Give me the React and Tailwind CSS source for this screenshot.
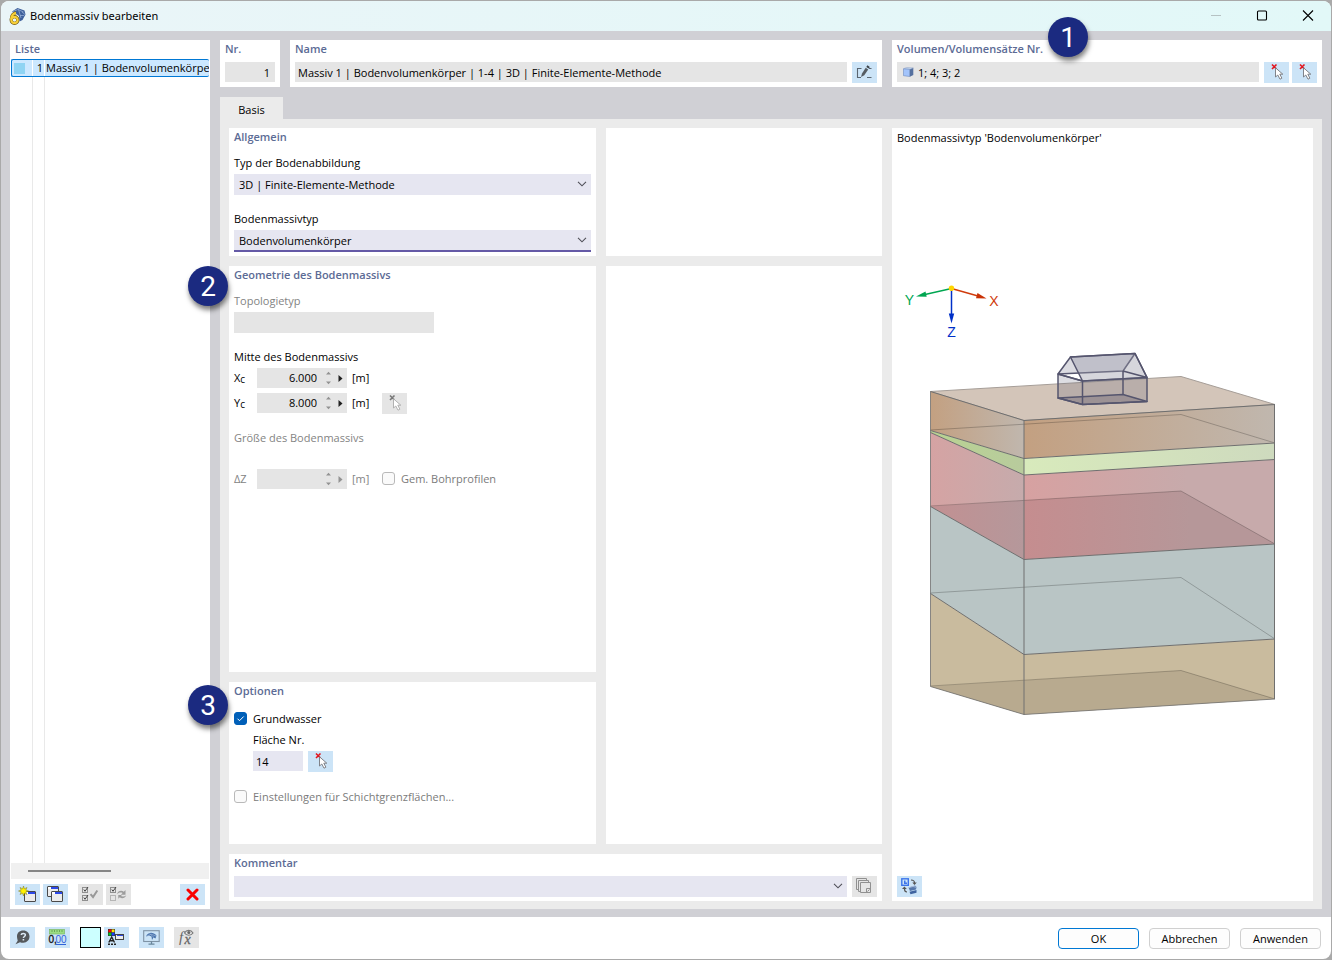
import React from "react";

const iconButton = "flex h-[21px] w-[25px] shrink-0 items-center justify-center bg-[#cce4f7]";
const iconButtonOff = "flex h-[21px] w-[25px] shrink-0 items-center justify-center bg-[#e5e5e5]";

function Heading({ children }) {
  return <h2 className="h-[18px] text-[11px] leading-[18px] font-semibold text-[#5c6b95]">{children}</h2>;
}

function Badge({ n, className }) {
  return (
    <span
      className={
        "absolute z-10 flex size-10 items-center justify-center rounded-full bg-[#1b2a80] pt-[2px] font-['Roboto',sans-serif] text-[28px] leading-none text-white shadow-[1px_4px_5px_rgba(0,0,0,0.5)] " +
        className
      }
    >
      {n}
    </span>
  );
}

function Select({ id, value, focused }) {
  return (
    <div className="relative w-full">
      <select
        id={id}
        defaultValue={value}
        className={
          "block w-full appearance-none rounded-none bg-[#e6e6f1] pl-[5px] pr-6 text-[11px] leading-[21px] text-black outline-none " +
          (focused ? "h-[22px] border-b-2 border-[#6459a6]" : "h-[21px]")
        }
      >
        <option>{value}</option>
      </select>
      <svg className="pointer-events-none absolute right-1 top-[6px]" width="10" height="8" viewBox="0 0 10 8" fill="none" stroke="#505058" strokeWidth="1.1">
        <path d="M1 1.8 5 5.8 9 1.8" />
      </svg>
    </div>
  );
}

function PickIcon({ off }) {
  return (
    <svg width="21" height="19" viewBox="0 0 21 19" fill="none">
      <path d="M6 1.5 10.5 6M10.5 1.5 6 6" stroke={off ? "#777" : "#e3141c"} strokeWidth="1.6" />
      <path d="M9.5 4.8V14l2.3-2 2.2 4.2 1.9-1-2.1-4h3z" fill="#fff" stroke={off ? "#aaa" : "#75767c"} strokeWidth="0.9" />
    </svg>
  );
}

function EditIcon() {
  return (
    <svg width="17" height="15" viewBox="0 0 17 15" fill="none">
      <path d="M5.500 3.500H1.500V12.500H5M11 12.500H15.500M13 3.500H15.500" stroke="#5a6570" strokeWidth="1.1" />
      <path d="M5 12 6 8.500 9.700 2.800 12.200 4.400 8.300 10.200z" fill="#555c63" />
      <path d="M10.300 2 11.400.3 13.800 1.900 12.700 3.600z" fill="#3c4147" />
    </svg>
  );
}

function AppIcon() {
  return (
    <svg width="17" height="17" viewBox="0 0 17 17">
      <path d="M3 3.500 8.500 0 15.500 2.500 16.500 6.500 13.500 12 10.500 13.500 10 8 6 5z" fill="#3d5f9b" />
      <path d="M4 3.500 9 1.500 14.500 4M9.500 1.500 12 10M13 4 16 6.500M11 7.500 15 7.500" stroke="#9db6dc" strokeWidth=".7" fill="none" />
      <path d="M7 4.800C4 5.500 2.300 8.300 2.300 11.500" fill="none" stroke="#6b5410" strokeWidth="3.200" />
      <circle cx="5.500" cy="12" r="3.300" fill="none" stroke="#6b5410" strokeWidth="3.200" />
      <path d="M7 4.900C4.200 5.600 2.400 8.300 2.300 11.500" fill="none" stroke="#f7cf38" strokeWidth="2.200" />
      <circle cx="5.500" cy="12" r="3.200" fill="none" stroke="#f7cf38" strokeWidth="2.200" />
    </svg>
  );
}

function CubeIcon() {
  return (
    <svg width="11" height="10" viewBox="0 0 11 10">
      <path d="M.5 1.800 3.500.4 10.300.9 7 2.400z" fill="#c6d7ee" stroke="#7c93bd" strokeWidth=".4" />
      <path d="M.5 1.800 6.800 2.400V9.500L.5 8.700z" fill="#a3c4fb" stroke="#6f8cc0" strokeWidth=".6" />
      <path d="M6.800 2.400 10.300 1V8L6.800 9.700z" fill="#55709f" />
    </svg>
  );
}

function WindowShape({ x, y }) {
  return (
    <g transform={`translate(${x} ${y})`}>
      <rect x=".5" y=".5" width="11" height="10" rx=".5" fill="#ececec" stroke="#4a4a4a" />
      <rect x="1" y="1" width="10" height="2" fill="#fff" />
      <rect x="4" y="1" width="7" height="2" fill="#2c49e8" />
    </g>
  );
}

function NewIcon() {
  return (
    <svg width="19" height="17" viewBox="0 0 19 17">
      <WindowShape x="6" y="5" />
      <path d="M5.500 0 6.400 2.800 9 1.500 7.800 4.100 10.500 5 7.800 5.900 9 8.500 6.400 7.200 5.500 10 4.600 7.200 2 8.500 3.200 5.900.5 5 3.200 4.100 2 1.500 4.600 2.800z" fill="#fff200" stroke="#77742c" strokeWidth=".5" />
    </svg>
  );
}

function CopyWindowsIcon() {
  return (
    <svg width="17" height="17" viewBox="0 0 17 17">
      <WindowShape x="0" y="0" />
      <WindowShape x="4" y="5" />
    </svg>
  );
}

function ChecksIcon({ swap }) {
  return (
    <svg width="17" height="17" viewBox="0 0 17 17" fill="none" stroke="#8f8f8f">
      <rect x=".5" y="1.500" width="5" height="5" />
      <path d="M1.800 3.500 3 5.300 6 1" stroke="#444" />
      <rect x=".5" y="9.500" width="5" height="5" stroke={swap ? "#b5b5b5" : "#8f8f8f"} />
      {swap ? (
        <g fill="#9c9c9c" stroke="none">
          <path d="M6.800 8.200C8 4.800 11.500 4 13.800 5.800L15.500 4V8.800H10.800L12.600 7C10.800 6.200 8.600 6.500 6.800 8.200z" />
          <path d="M16.300 9.300C15 12.300 11.800 12.900 9.800 11.300L8.300 12.800V9L12 8.900 10.900 10.100C12.600 10.900 14.700 10.700 16.300 9.300z" />
        </g>
      ) : (
        <>
          <path d="M1.800 11.500 3 13.300 6 9" stroke="#444" />
          <path d="M8.500 8.200 11 11 15.300 4.500" stroke="#999" strokeWidth="2" />
        </>
      )}
    </svg>
  );
}

function DeleteIcon() {
  return (
    <svg width="13" height="13" viewBox="0 0 13 13" stroke="#f90000" strokeWidth="3" strokeLinecap="round">
      <path d="M2 2 11 11M11 2 2 11" />
    </svg>
  );
}

function HelpIcon() {
  return (
    <svg width="15" height="15" viewBox="0 0 15 15">
      <path d="M8.300.5C4.500.5 2 2.900 2 6.200 2 8.500 2.700 9.700 2.700 10.700L.5 14.300 5 12.200C6 12.600 7 12.700 8.300 12.700 12 12.700 14.500 10 14.500 6.600 14.500 3 12 .5 8.300.5z" fill="#55585b" />
      <path d="M6.200 5C6.300 3.200 10.400 3 10.400 5.100 10.400 6.500 8.400 6.500 8.400 8" fill="none" stroke="#dce9f4" strokeWidth="1.500" />
      <rect x="7.600" y="9" width="1.600" height="1.500" fill="#dce9f4" />
    </svg>
  );
}

function UnitsIcon() {
  return (
    <svg width="19" height="17" viewBox="0 0 19 17">
      <rect x="1.500" y=".5" width="15" height="4.500" fill="#9bdc83" stroke="#79b965" strokeWidth=".7" />
      <path d="M4 1V3M6.500 1V3M9 1V3M11.500 1V3M14 1V3" stroke="#5e9c4d" strokeWidth=".8" />
      <text x="0.500" y="14" fontSize="10" fontFamily="Liberation Sans, sans-serif" fill="#111" stroke="#111" strokeWidth=".3">0,</text>
      <text x="7.500" y="14" fontSize="10" fontFamily="Liberation Sans, sans-serif" fill="#2f62d9">00</text>
      <path d="M8 15.500H18" stroke="#2f62d9" />
    </svg>
  );
}

function ColorsIcon() {
  return (
    <svg width="19" height="17" viewBox="0 0 19 17">
      <rect x="1" y="0" width="7" height="7" fill="#333" />
      <rect x="1.500" y=".5" width="2.800" height="2.800" fill="#f00" />
      <rect x="4.700" y=".5" width="2.800" height="2.800" fill="#ffe600" />
      <rect x="1.500" y="3.700" width="2.800" height="2.800" fill="#00c41a" />
      <rect x="4.700" y="3.700" width="2.800" height="2.800" fill="#173cff" />
      <path d="M1.800 13.500 4.700 8 7.500 13.500M3 11.800H6.500" fill="none" stroke="#222" strokeWidth="1.400" />
      <path d="M1 15.300H9" stroke="#222" strokeWidth="1.600" strokeDasharray="2 1" />
      <rect x="8.500" y="5.500" width="8" height="5" fill="#ececec" stroke="#444" />
      <rect x="10" y="6" width="6" height="1" fill="#2c49e8" />
    </svg>
  );
}

function MonitorIcon() {
  return (
    <svg width="17" height="15" viewBox="0 0 17 15" fill="none">
      <rect x=".7" y=".7" width="15.500" height="10.800" stroke="#7f93a5" strokeWidth="1.100" />
      <path d="M8.500 11.500V14M5.500 14.200H11.500" stroke="#69869c" strokeWidth="1.300" />
      <path d="M3 6.500C5 1.800 10 1.500 13.500 5.500L12.500 8.500 10.500 7.500 9 10 8.500 6.500 6 5.500z" fill="#4a74ad" />
      <path d="M4 6 8 4.200 13 6M6.500 3.500 11 7.500" stroke="#a2bcdd" strokeWidth=".6" />
    </svg>
  );
}

function FxIcon() {
  return (
    <svg width="19" height="17" viewBox="0 0 19 17" fill="none">
      <text x="2" y="13" fontSize="15" fontStyle="italic" fontFamily="Liberation Serif, serif" fill="#666">f</text>
      <text x="7.500" y="14.500" fontSize="14" fontStyle="italic" fontFamily="Liberation Serif, serif" fill="#666" stroke="#666" strokeWidth=".3">x</text>
      <path d="M7.500 4C9.500.5 14 .5 16 4 14 7 9.500 7 7.500 4z" stroke="#777" strokeWidth="1.100" />
      <circle cx="11.800" cy="3.500" r="1.500" fill="#666" />
    </svg>
  );
}

function LayersIcon() {
  return (
    <svg width="17" height="17" viewBox="0 0 17 17" fill="none" stroke="#909090">
      <path d="M2.500 11.500H.5V.5H10.500V2.500M4.500 13.500H2.500V2.500H12.500V4.500" />
      <path d="M4.500 4.500H14.500V14.500H4.500zM10.500 14.500V10.500H14.500M11.500 13.500 13.500 11.500" />
    </svg>
  );
}

function ViewSwapIcon() {
  return (
    <svg width="17" height="17" viewBox="0 0 17 17" fill="none">
      <rect x=".8" y=".8" width="6.500" height="6.500" stroke="#3c74ea" strokeWidth="1.400" />
      <path d="M3 2.500V6H6V4.500H4.500V2.500z" fill="#3c74ea" />
      <path d="M10 2C12.500 2 13.500 3 13.500 5" stroke="#555" strokeWidth="1.200" />
      <path d="M11.300 4.500 13.500 7 15.800 4.500z" fill="#555" />
      <path d="M3.500 11C3.500 13 4.500 14 6 14" stroke="#555" strokeWidth="1.200" />
      <path d="M1 11 3.400 8.500 5.800 11z" fill="#555" />
      <path d="M7.500 9.500 14 7.500 15.500 9 15 11.500 9 13z" fill="#5577ab" />
      <path d="M8.500 13.800 15.500 12V14.800L9.500 16.300z" fill="#3f639f" />
      <path d="M8 9.500 12 8.500 15 9.200" stroke="#b9cae4" strokeWidth=".8" />
    </svg>
  );
}

function NumberField({ id, label, sub, value, disabled }) {
  const c = disabled ? "text-[#838383]" : "text-black";
  return (
    <div className={"flex h-5 items-center text-[11px] leading-5 " + c}>
      <label htmlFor={id} className="w-[23px]">
        {label}
        {sub && <sub className="bottom-0 align-[-1px] text-[10px] leading-none">{sub}</sub>}
      </label>
      <div className="flex h-5 w-[90px] items-center bg-[#e5e5e5]">
        <input id={id} defaultValue={value} disabled={disabled} className="h-5 w-[60px] bg-transparent text-right outline-none" />
        <svg width="30" height="20" viewBox="0 0 30 20">
          <path d="M9 6.500 11.500 3.800 14 6.500zM9 13.500 11.500 16.200 14 13.500z" fill="#929292" />
          <path d="M21.500 7V14L25.500 10.500z" fill={disabled ? "#929292" : "#202020"} />
        </svg>
      </div>
      <span className="ml-[5px] w-[30px]">[m]</span>
    </div>
  );
}

function CheckRow({ id, label, checked, disabled }) {
  return (
    <div className="flex h-[18px] items-start gap-[6px]">
      <span className="relative mt-[2px] block size-[13px]">
        <input
          id={id}
          type="checkbox"
          defaultChecked={checked}
          disabled={disabled}
          className="peer block size-[13px] appearance-none rounded-[3px] border border-[#b9b9b9] bg-[#fafafa] checked:border-[#005fb8] checked:bg-[#005fb8]"
        />
        <svg className="pointer-events-none absolute inset-0 hidden peer-checked:block" width="13" height="13" viewBox="0 0 13 13" fill="none" stroke="#fff">
          <path d="M3.500 6.700 5.500 8.700 9.700 4.500" />
        </svg>
      </span>
      <label htmlFor={id} className={"text-[11px] leading-[18px] " + (disabled ? "text-[#7b7b7b]" : "text-black")}>
        {label}
      </label>
    </div>
  );
}

const edge = "#6f6f6f";

function SoilDrawing() {
  return (
    <svg className="h-auto w-full" viewBox="892 280 421 464" role="img" aria-label="Bodenvolumenkörper" fill="none" strokeLinejoin="round">
      <defs>
        <linearGradient id="soilA"><stop offset="0" stopColor="#c3a081" /><stop offset="1" stopColor="#c0b7ae" /></linearGradient>
        <linearGradient id="soilB"><stop offset="0" stopColor="#b9d392" /><stop offset="1" stopColor="#b8cb9d" /></linearGradient>
        <linearGradient id="soilC"><stop offset="0" stopColor="#d8eabc" /><stop offset="1" stopColor="#cedabe" /></linearGradient>
        <linearGradient id="soilD"><stop offset="0" stopColor="#d7a1a1" /><stop offset=".65" stopColor="#c7aaab" /></linearGradient>
        <linearGradient id="soilE"><stop offset="0" stopColor="#d5a3a3" /><stop offset="1" stopColor="#c6abac" /></linearGradient>
        <linearGradient id="soilF" gradientUnits="userSpaceOnUse" x1="1024" y1="0" x2="1190" y2="0"><stop offset="0" stopColor="#c58d8f" /><stop offset="1" stopColor="#b69799" /></linearGradient>
        <linearGradient id="soilG"><stop offset="0" stopColor="#c29092" /><stop offset="1" stopColor="#b5989b" /></linearGradient>
      </defs>

      <path d="M930.500 391.500 1181 376.500 1275 404.500 1024 420.500z" fill="#d3c5b9" stroke="#a69e98" />
      <path d="M930.500 391.500 1024 420.500V458.500L930.500 430.500z" fill="url(#soilA)" />
      <path d="M1024 420.500 1275 404.500V443L1024 458.500z" fill="url(#soilA)" />
      <path d="M930.500 430.500 1024 458.500V475L930.500 432.500z" fill="url(#soilB)" />
      <path d="M1024 458.500 1275 443V459.500L1024 475z" fill="url(#soilC)" />
      <path d="M930.500 432.500 1024 475V559.500L930.500 506.500z" fill="url(#soilE)" />
      <path d="M1024 475 1275 459.500V544L1024 559.500z" fill="url(#soilD)" />
      <path d="M930.500 506.500 1024 500.500V559.500z" fill="url(#soilG)" />
      <path d="M1024 500.500 1181 491 1275 544 1024 559.500z" fill="url(#soilF)" />
      <path d="M930.500 506.500 1024 559.500 1275 544V639L1024 654.500 930.500 593.500z" fill="#b9c5c5" />
      <path d="M930.500 593.500 1024 654.500 1275 639V699L1024 714.500 930.500 686.500z" fill="#c9bb9e" />
      <path d="M930.500 686.500 1181 670.500 1275 699 1024 714.500z" fill="#b8aa8f" />

      <g stroke="#000" strokeOpacity=".22">
        <path d="M930.500 430 1181 414.500 1275 443" />
        <path d="M930.500 506 1181 491 1275 544" />
        <path d="M930.500 593 1181 577.500 1275 639" />
        <path d="M930.500 686 1181 670.500 1275 699" />
      </g>
      <g stroke={edge}>
        <path d="M930.500 391.500 1024 420.500 1275 404.500M930.500 430.500 1024 458.500 1275 443M930.500 432.500 1024 475 1275 459.500M930.500 506.500 1024 559.500 1275 544M930.500 593.500 1024 654.500 1275 639" />
        <path d="M930.500 391.500V686.500L1024 714.500 1275 699" strokeOpacity=".8" />
        <path d="M1274.500 404.500V699" />
        <path d="M1024 420.500V714.500" strokeWidth="2" strokeOpacity=".5" />
      </g>

      <g stroke="#55556e" strokeWidth="1.500">
        <path d="M1058 398 1082.500 404.500 1147 401.500 1123 394.500z" fill="#9a8f91" fillOpacity=".65" />
        <path d="M1058 374 1082.500 381V404.500L1058 398zM1082.500 381 1147 377.500V401.500L1082.500 404.500z" fill="#55556e" fillOpacity=".2" />
        <path d="M1070.500 357 1135 353.500 1123 371 1058 374z" fill="#9899a8" fillOpacity=".35" />
        <path d="M1070.500 357 1135 353.500 1147 377.500 1082.500 381z" fill="#9899a8" fillOpacity=".4" />
        <path d="M1058 374 1082.500 381M1123 371 1147 377.500M1123 371V394.500M1135 353.500 1147 377.500" />
      </g>

      <path d="M951.500 288.500 925 294.500" stroke="#00a651" strokeWidth="1.300" />
      <path d="M916 296.500 925.500 291.500 926.700 296.800z" fill="#00a651" />
      <path d="M951.500 288.500 978 296" stroke="#d03b0c" strokeWidth="1.300" />
      <path d="M986.500 298.500 976 298.200 977.500 293z" fill="#c93206" />
      <path d="M951.500 288.500V315" stroke="#0030c8" strokeWidth="1.500" />
      <path d="M951.500 323.500 948.800 313.500H954.200z" fill="#0030c8" />
      <circle cx="951.500" cy="288.300" r="2.700" fill="#ffd500" />
      <g fontFamily="Liberation Sans, sans-serif" fontSize="14" textAnchor="middle">
        <text x="909.500" y="304.500" fill="#00a651">Y</text>
        <text x="994" y="306" fill="#d03b0c">X</text>
        <text x="951.500" y="337" fill="#0030c8">Z</text>
      </g>
    </svg>
  );
}

export default function App() {
  return (
    <div className="flex min-h-screen flex-col bg-[#a9a9a9] p-px font-['Open_Sans',sans-serif] text-[11px] text-black">
      <div className="flex flex-1 flex-col overflow-hidden rounded-lg bg-white">
        <header className="flex h-[30px] shrink-0 items-center bg-gradient-to-r from-[#eaf5f8] to-[#e2f8f8] pl-2">
          <AppIcon />
          <h1 className="ml-1 flex-1 font-['Noto_Sans',sans-serif] text-[11px] leading-[18px]">Bodenmassiv bearbeiten</h1>
          <button aria-label="Minimieren" disabled className="flex h-[30px] w-[46px] items-center justify-center">
            <svg width="10" height="10" stroke="#b6c2c3"><path d="M0 4.500H10" /></svg>
          </button>
          <button aria-label="Maximieren" className="flex h-[30px] w-[46px] items-center justify-center">
            <svg width="12" height="12" fill="none" stroke="#000" strokeWidth="1.100"><rect x="1.500" y="1" width="9" height="9" rx="1" /></svg>
          </button>
          <button aria-label="Schließen" className="flex h-[30px] w-[46px] items-center justify-center">
            <svg width="12" height="12" stroke="#000" strokeWidth="1.100"><path d="M1 .5 11 10.500M11 .5 1 10.500" /></svg>
          </button>
        </header>

        <main className="flex flex-1 gap-[10px] bg-[#d0d0d5] px-[9px] pt-[9px] pb-2">
          <aside className="flex w-[200px] shrink-0 flex-col bg-white px-px">
            <div className="h-[19px] pl-1"><Heading>Liste</Heading></div>
            <div className="flex flex-1 flex-col bg-[linear-gradient(to_right,transparent_21px,#e9e9e9_21px,#e9e9e9_22px,transparent_22px,transparent_33px,#e9e9e9_33px,#e9e9e9_34px,transparent_34px)]">
              <button className="flex h-[18px] w-full items-center overflow-hidden rounded-[2px] border border-r-0 border-[#0078d4] bg-[#cce8ff] text-left leading-4 whitespace-nowrap">
                <span className="ml-[2px] size-[11px] shrink-0 bg-[#8fd4f3]" />
                <span className="ml-[7px] w-[11px] shrink-0 border-l border-white text-right">1</span>
                <span className="ml-[1px] border-l border-white pl-px">Massiv 1 | Bodenvolumenkörper</span>
              </button>
            </div>
            <div className="flex h-4 items-center bg-[#f0f0f0]"><span className="ml-[17px] h-[2px] w-[83px] bg-[#868686]" /></div>
            <div className="flex gap-[3px] px-1 pt-[5px] pb-1">
              <button aria-label="Neu" className={iconButton}><NewIcon /></button>
              <button aria-label="Kopieren" className={iconButton}><CopyWindowsIcon /></button>
              <button aria-label="Alle auswählen" disabled className={iconButtonOff + " ml-[7px]"}><ChecksIcon /></button>
              <button aria-label="Auswahl umkehren" disabled className={iconButtonOff}><ChecksIcon swap /></button>
              <button aria-label="Löschen" className={iconButton + " ml-auto"}><DeleteIcon /></button>
            </div>
          </aside>

          <div className="flex min-w-0 flex-1 flex-col">
            <div className="mb-[10px] grid h-[47px] grid-cols-[662fr_430fr] gap-[10px]">
              <div className="grid min-w-0 grid-cols-[60px_minmax(0,1fr)] gap-[10px]">
                <section className="bg-white px-[5px]">
                  <Heading><label htmlFor="nr">Nr.</label></Heading>
                  <input id="nr" readOnly value="1" className="mt-1 block h-5 w-full bg-[#e5e5e5] pr-[5px] text-right outline-none" />
                </section>
                <section className="bg-white px-[5px]">
                  <Heading><label htmlFor="name">Name</label></Heading>
                  <div className="mt-1 flex gap-[5px]">
                    <input id="name" readOnly value="Massiv 1 | Bodenvolumenkörper | 1-4 | 3D | Finite-Elemente-Methode" className="h-5 min-w-0 flex-1 bg-[#e5e5e5] px-[3px] outline-none" />
                    <button aria-label="Name bearbeiten" className={iconButton}><EditIcon /></button>
                  </div>
                </section>
              </div>
              <section className="relative min-w-0 bg-white px-[5px]">
                <Heading><label htmlFor="vol">Volumen/Volumensätze Nr.</label></Heading>
                <Badge n="1" className="-top-[23px] left-[156px]" />
                <div className="mt-1 flex">
                  <div className="flex h-5 min-w-0 flex-1 items-center gap-1 bg-[#e5e5e5] pl-[6px]">
                    <CubeIcon />
                    <input id="vol" readOnly value="1; 4; 3; 2" className="h-5 min-w-0 flex-1 bg-transparent outline-none" />
                  </div>
                  <button aria-label="Volumen auswählen" className={iconButton + " ml-[5px]"}><PickIcon /></button>
                  <button aria-label="Volumensätze auswählen" className={iconButton + " ml-[3px]"}><PickIcon /></button>
                </div>
              </section>
            </div>

            <div role="tablist" className="flex h-[22px]">
              <button role="tab" aria-selected="true" className="w-[63px] bg-[#ebebeb] pt-[4px]">Basis</button>
            </div>

            <div className="grid flex-1 grid-cols-[653fr_421fr] gap-[10px] bg-[#ebebeb] px-[9px] pt-[9px] pb-2">
              <div className="grid min-w-0 grid-cols-[367fr_276fr] grid-rows-[128px_1fr_162px_47px] gap-[10px]">
                <section className="bg-white px-[5px]">
                  <Heading>Allgemein</Heading>
                  <label htmlFor="typ" className="mt-2 mb-[2px] block leading-[18px]">Typ der Bodenabbildung</label>
                  <Select id="typ" value="3D | Finite-Elemente-Methode" />
                  <label htmlFor="massivtyp" className="mt-[15px] mb-[2px] block leading-[18px]">Bodenmassivtyp</label>
                  <Select id="massivtyp" value="Bodenvolumenkörper" focused />
                </section>
                <section className="bg-white" />

                <section className="relative bg-white px-[5px]">
                  <Badge n="2" className="top-0 -left-[41px]" />
                  <Heading>Geometrie des Bodenmassivs</Heading>
                  <label htmlFor="topo" className="mt-2 mb-[2px] block leading-[18px] text-[#838383]">Topologietyp</label>
                  <input id="topo" disabled className="block h-[21px] w-[200px] bg-[#e5e5e5]" />
                  <h3 className="mt-[15px] mb-[2px] leading-[18px]">Mitte des Bodenmassivs</h3>
                  <NumberField id="xc" label="X" sub="c" value="6.000" />
                  <div className="mt-[5px] flex h-5">
                    <NumberField id="yc" label="Y" sub="c" value="8.000" />
                    <button aria-label="Mitte auswählen" disabled className={iconButtonOff}><PickIcon off /></button>
                  </div>
                  <h3 className="mt-4 mb-[22px] leading-[18px] text-[#838383]">Größe des Bodenmassivs</h3>
                  <div className="flex items-center">
                    <NumberField id="dz" label="ΔZ" disabled />
                    <CheckRow id="bohr" label="Gem. Bohrprofilen" disabled />
                  </div>
                </section>
                <section className="row-span-2 bg-white" />

                <section className="relative bg-white px-[5px]">
                  <Badge n="3" className="top-[3px] -left-[41px]" />
                  <Heading>Optionen</Heading>
                  <div className="mt-[10px]"><CheckRow id="gw" label="Grundwasser" checked /></div>
                  <div className="mt-[3px] pl-[19px]">
                    <label htmlFor="flaeche" className="mb-[2px] block leading-[18px]">Fläche Nr.</label>
                    <div className="flex gap-[5px]">
                      <input id="flaeche" defaultValue="14" className="h-5 w-[50px] bg-[#e6e6f1] px-[3px] outline-none" />
                      <button aria-label="Fläche auswählen" className={iconButton}><PickIcon /></button>
                    </div>
                  </div>
                  <div className="mt-4"><CheckRow id="schicht" label="Einstellungen für Schichtgrenzflächen..." disabled /></div>
                </section>

                <section className="col-span-2 bg-white px-[5px]">
                  <Heading><label htmlFor="kommentar">Kommentar</label></Heading>
                  <div className="mt-1 flex gap-[5px]">
                    <Select id="kommentar" value="" />
                    <button aria-label="Kommentare übernehmen" disabled className={iconButtonOff}><LayersIcon /></button>
                  </div>
                </section>
              </div>

              <section className="flex min-w-0 flex-col bg-white">
                <h2 className="px-[5px] pt-[1px] leading-[18px]">Bodenmassivtyp 'Bodenvolumenkörper'</h2>
                <div className="flex flex-1 items-center"><SoilDrawing /></div>
                <div className="px-[5px] pb-1">
                  <button aria-label="Darstellung wechseln" className={iconButton}><ViewSwapIcon /></button>
                </div>
              </section>
            </div>
          </div>
        </main>

        <footer className="flex h-[42px] shrink-0 items-start pt-[10px] pr-[10px] pl-[9px]">
          <div className="flex gap-[10px]">
            <button aria-label="Hilfe" className={iconButton}><HelpIcon /></button>
            <button aria-label="Einheiten" className={iconButton}><UnitsIcon /></button>
            <div className="flex gap-[3px]">
              <button aria-label="Farbe" className="size-[21px] border border-black bg-[#ccffff]" />
              <button aria-label="Farben zuweisen" className={iconButton}><ColorsIcon /></button>
            </div>
            <button aria-label="Ansicht" className={iconButton}><MonitorIcon /></button>
            <button aria-label="Formel" disabled className={iconButtonOff}><FxIcon /></button>
          </div>
          <div className="ml-auto flex gap-[10px] pt-[1px]">
            <button className="h-[21px] w-[81px] rounded border border-[#0078d4] bg-[#fdfdfd] leading-[19px]">OK</button>
            <button className="h-[21px] w-[81px] rounded border border-[#d0d0d0] bg-[#fdfdfd] leading-[19px]">Abbrechen</button>
            <button className="h-[21px] w-[81px] rounded border border-[#d0d0d0] bg-[#fdfdfd] leading-[19px]">Anwenden</button>
          </div>
        </footer>
      </div>
    </div>
  );
}
